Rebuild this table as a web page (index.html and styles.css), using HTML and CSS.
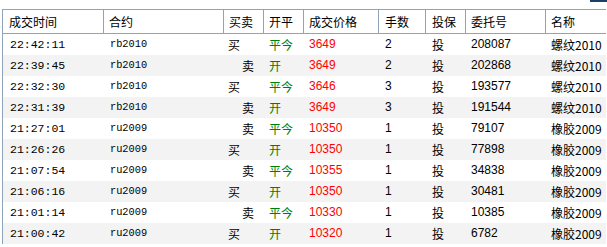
FILE: index.html
```html
<!DOCTYPE html>
<html>
<head>
<meta charset="utf-8">
<link rel="stylesheet" href="styles.css">
</head>
<body>
<div class="topbar"><div class="mark"></div></div>
<div class="grid">
  <div class="row head">
    <div class="c">成交时间</div><div class="c">合约</div><div class="c">买卖</div><div class="c">开平</div><div class="c">成交价格</div><div class="c c6">手数</div><div class="c c7">投保</div><div class="c">委托号</div><div class="c c9">名称</div>
  </div>
  <div class="row">
    <div class="c t">22:42:11</div><div class="c k">rb2010</div><div class="c b">买</div><div class="c g">平今</div><div class="c p">3649</div><div class="c n c6">2</div><div class="c cn c7">投</div><div class="c n">208087</div><div class="c cn c9">螺纹2010</div>
  </div>
  <div class="row alt">
    <div class="c t">22:39:45</div><div class="c k">rb2010</div><div class="c s">卖</div><div class="c g">开</div><div class="c p">3649</div><div class="c n c6">2</div><div class="c cn c7">投</div><div class="c n">202868</div><div class="c cn c9">螺纹2010</div>
  </div>
  <div class="row">
    <div class="c t">22:32:30</div><div class="c k">rb2010</div><div class="c b">买</div><div class="c g">平今</div><div class="c p">3646</div><div class="c n c6">3</div><div class="c cn c7">投</div><div class="c n">193577</div><div class="c cn c9">螺纹2010</div>
  </div>
  <div class="row alt">
    <div class="c t">22:31:39</div><div class="c k">rb2010</div><div class="c s">卖</div><div class="c g">开</div><div class="c p">3649</div><div class="c n c6">3</div><div class="c cn c7">投</div><div class="c n">191544</div><div class="c cn c9">螺纹2010</div>
  </div>
  <div class="row">
    <div class="c t">21:27:01</div><div class="c k">ru2009</div><div class="c s">卖</div><div class="c g">平今</div><div class="c p">10350</div><div class="c n c6">1</div><div class="c cn c7">投</div><div class="c n">79107</div><div class="c cn c9">橡胶2009</div>
  </div>
  <div class="row alt">
    <div class="c t">21:26:26</div><div class="c k">ru2009</div><div class="c b">买</div><div class="c g">开</div><div class="c p">10350</div><div class="c n c6">1</div><div class="c cn c7">投</div><div class="c n">77898</div><div class="c cn c9">橡胶2009</div>
  </div>
  <div class="row">
    <div class="c t">21:07:54</div><div class="c k">ru2009</div><div class="c s">卖</div><div class="c g">平今</div><div class="c p">10355</div><div class="c n c6">1</div><div class="c cn c7">投</div><div class="c n">34838</div><div class="c cn c9">橡胶2009</div>
  </div>
  <div class="row alt">
    <div class="c t">21:06:16</div><div class="c k">ru2009</div><div class="c b">买</div><div class="c g">开</div><div class="c p">10350</div><div class="c n c6">1</div><div class="c cn c7">投</div><div class="c n">30481</div><div class="c cn c9">橡胶2009</div>
  </div>
  <div class="row">
    <div class="c t">21:01:14</div><div class="c k">ru2009</div><div class="c s">卖</div><div class="c g">平今</div><div class="c p">10330</div><div class="c n c6">1</div><div class="c cn c7">投</div><div class="c n">10385</div><div class="c cn c9">橡胶2009</div>
  </div>
  <div class="row alt">
    <div class="c t">21:00:42</div><div class="c k">ru2009</div><div class="c b">买</div><div class="c g">开</div><div class="c p">10320</div><div class="c n c6">1</div><div class="c cn c7">投</div><div class="c n">6782</div><div class="c cn c9">橡胶2009</div>
  </div>
</div>
</body>
</html>
```
FILE: styles.css
```css
html, body {
  margin: 0;
  padding: 0;
  background: #ffffff;
}
body {
  font-family: "Noto Sans CJK SC", "Liberation Sans", sans-serif;
  font-size: 12px;
  color: #000;
}
.topbar {
  height: 9px;
  display: flex;
  justify-content: flex-end;
}
.mark {
  width: 17px;
  height: 2px;
  background: #1d3f66;
}
.grid {
  margin-left: 2px;
  width: 604px;
  box-sizing: border-box;
  border-left: 1px solid #8fa3b9;
}
.row {
  display: grid;
  grid-template-columns: 101px 120px 40px 40px 75px 47px 40px 80px 60px;
  height: 21px;
  line-height: 21px;
}
.row.alt {
  background: #f3f3f3;
}
.head {
  height: 25px;
  line-height: 23px;
  box-sizing: border-box;
  border-top: 1px solid #8fa3b9;
  border-bottom: 1px solid #8fa3b9;
}
.c {
  box-sizing: border-box;
  padding-left: 5px;
  white-space: nowrap;
  overflow: hidden;
}
.head .c {
  border-right: 1px solid #8fa3b9;
}
.head .c:last-child {
  border-right: none;
}
.head .c:first-child {
  padding-left: 6px;
}
.c6, .c7 {
  padding-left: 6px;
}
.t {
  font-family: "Liberation Mono", monospace;
  font-size: 11.5px;
  padding-left: 7px;
}
.k {
  font-family: "Liberation Mono", monospace;
  font-size: 10.3px;
  padding-left: 6px;
}
.b {
  padding-left: 4px;
}
.s {
  padding-left: 18px;
}
.g {
  color: #008000;
  padding-left: 5px;
}
.p {
  color: #ff0000;
  font-family: "Liberation Sans", sans-serif;
  padding-left: 5px;
}
.n {
  font-family: "Liberation Sans", sans-serif;
}
.cn {
  font-family: "Noto Sans CJK SC", sans-serif;
}
```
